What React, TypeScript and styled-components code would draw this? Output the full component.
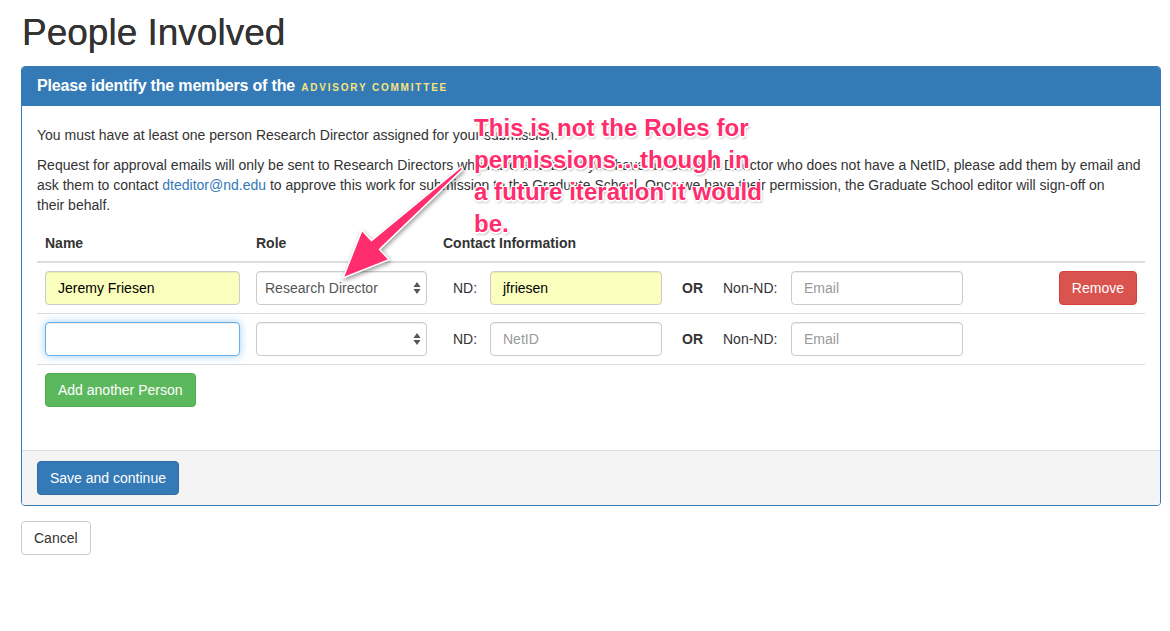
import React from "react";
import styled, { createGlobalStyle } from "styled-components";

const GlobalStyle = createGlobalStyle`
  html, body { margin: 0; padding: 0; background: #fff; }
  body {
    font-family: "Liberation Sans", Helvetica, Arial, sans-serif;
    font-size: 14px;
    line-height: 20px;
    color: #333;
  }
  * { box-sizing: border-box; }
`;

const Page = styled.div`
  position: relative;
  width: 1170px;
  height: 631px;
  padding: 0 9px 0 21px;
  overflow: hidden;
`;

const Title = styled.h1`
  margin: 13px 0 13px 1px;
  font-size: 37px;
  line-height: 40px;
  font-weight: 500;
  color: #333;
  text-shadow: 0 0 0.4px #333;
`;

const Panel = styled.section`
  border: 1px solid #337ab7;
  border-radius: 4px;
  margin-bottom: 15px;
  overflow: hidden;
`;

const PanelHeading = styled.div`
  background: #337ab7;
  color: #fff;
  padding: 10px 15px;
`;

const PanelTitle = styled.h3`
  margin: 0;
  font-size: 16px;
  line-height: 17px;
  font-weight: 700;
  letter-spacing: -0.18px;
`;

const Term = styled.span`
  color: #f7e47a;
  font-size: 10px;
  letter-spacing: 1.8px;
  text-transform: uppercase;
  margin-left: 2px;
`;

const PanelBody = styled.div`
  padding: 19px 15px 15px;
`;

const Para = styled.p`
  margin: 0 0 10px;
`;

const Line = styled.span`
  white-space: nowrap;
`;

const Link = styled.a`
  color: #337ab7;
  text-decoration: none;
`;

const Table = styled.div`
  margin-bottom: 20px;
`;

const Row = styled.div<{ $head?: boolean }>`
  display: grid;
  grid-template-columns: 211px 187px 1fr 94px;
  align-items: center;
  border-bottom: ${(p) => (p.$head ? "2px" : "1px")} solid #ddd;
  font-weight: ${(p) => (p.$head ? 700 : 400)};
`;

const Cell = styled.div<{ $right?: boolean }>`
  padding: 8px;
  display: flex;
  justify-content: ${(p) => (p.$right ? "flex-end" : "flex-start")};
`;

const Contact = styled.div`
  padding: 8px;
  display: grid;
  grid-template-columns: 47px 172px 61px 68px 172px;
  align-items: center;
`;

const Label = styled.span<{ $pad?: number; $bold?: boolean }>`
  padding-left: ${(p) => p.$pad ?? 0}px;
  font-weight: ${(p) => (p.$bold ? 700 : 400)};
  white-space: nowrap;
`;

const Input = styled.div<{ $filled?: boolean; $focus?: boolean }>`
  width: 100%;
  height: 34px;
  padding: 6px 12px;
  border: 1px solid ${(p) => (p.$focus ? "#66afe9" : "#ccc")};
  border-radius: 4px;
  background: ${(p) => (p.$filled ? "#faffbd" : "#fff")};
  color: ${(p) => (p.$filled ? "#000" : "#999")};
  box-shadow: inset 0 1px 1px rgba(0, 0, 0, 0.075)
    ${(p) => (p.$focus ? ", 0 0 8px rgba(102, 175, 233, 0.6)" : "")};
  font-size: 14px;
  line-height: 20px;
  white-space: nowrap;
  overflow: hidden;
`;

const Select = styled.div`
  width: 100%;
  height: 34px;
  padding: 6px 5px 6px 8px;
  border: 1px solid #ccc;
  border-radius: 4px;
  background: #fff;
  color: #555;
  display: flex;
  align-items: center;
  justify-content: space-between;
  box-shadow: inset 0 1px 1px rgba(0, 0, 0, 0.075);
`;

const Arrows = () => (
  <svg width="8" height="14" viewBox="0 0 8 14">
    <path d="M4 1 L7.5 6 L0.5 6 Z" fill="#555" />
    <path d="M4 13 L7.5 8 L0.5 8 Z" fill="#555" />
  </svg>
);

const Button = styled.button<{ $kind: "danger" | "success" | "primary" | "default" }>`
  height: 34px;
  padding: 6px 12px;
  font-family: inherit;
  font-size: 14px;
  line-height: 20px;
  border-radius: 4px;
  border: 1px solid;
  cursor: pointer;
  white-space: nowrap;
  ${(p) =>
    p.$kind === "danger"
      ? "background:#d9534f;border-color:#d43f3a;color:#fff;"
      : p.$kind === "success"
      ? "background:#5cb85c;border-color:#4cae4c;color:#fff;"
      : p.$kind === "primary"
      ? "background:#337ab7;border-color:#2e6da4;color:#fff;"
      : "background:#fff;border-color:#ccc;color:#333;"}
`;

const PanelFooter = styled.div`
  background: #f4f4f4;
  border-top: 1px solid #ddd;
  padding: 10px 15px;
`;

const Note = styled.div`
  position: absolute;
  left: 474px;
  top: 112px;
  font-size: 24px;
  line-height: 32px;
  font-weight: 700;
  color: #ff2d6e;
  letter-spacing: 0.05px;
  text-shadow: -1px -1px 0 #fff, 1px -1px 0 #fff, -1px 1px 0 #fff, 1px 1px 0 #fff,
    0 -1.5px 0 #fff, 0 1.5px 0 #fff, -1.5px 0 0 #fff, 1.5px 0 0 #fff,
    1px 2px 3px rgba(0, 0, 0, 0.45);
  pointer-events: none;
`;

const ArrowLayer = styled.svg`
  position: absolute;
  left: 0;
  top: 0;
  pointer-events: none;
  filter: drop-shadow(1px 2px 2px rgba(0, 0, 0, 0.4));
`;

export default function App() {
  return (
    <>
      <GlobalStyle />
      <Page>
        <Title>People Involved</Title>
        <Panel>
          <PanelHeading>
            <PanelTitle>
              Please identify the members of the <Term>Advisory Committee</Term>
            </PanelTitle>
          </PanelHeading>
          <PanelBody>
            <Para>You must have at least one person Research Director assigned for your submission.</Para>
            <Para>
              <Line>
                Request for approval emails will only be sent to Research Directors who have a NetID. If you have a
                Research Director who does not have a NetID, please add them by email and
              </Line>
              <br />
              <Line>
                ask them to contact <Link href="#">dteditor@nd.edu</Link> to approve this work for submission to the
                Graduate School. Once we have their permission, the Graduate School editor will sign-off on
              </Line>
              <br />
              <Line>their behalf.</Line>
            </Para>
            <Table>
              <Row $head>
                <Cell>Name</Cell>
                <Cell>Role</Cell>
                <Cell>Contact Information</Cell>
                <Cell />
              </Row>
              <Row>
                <Cell>
                  <Input $filled>Jeremy Friesen</Input>
                </Cell>
                <Cell>
                  <Select>
                    <span>Research Director</span>
                    <Arrows />
                  </Select>
                </Cell>
                <Contact>
                  <Label $pad={10}>ND:</Label>
                  <Input $filled>jfriesen</Input>
                  <Label $pad={20} $bold>OR</Label>
                  <Label>Non-ND:</Label>
                  <Input>Email</Input>
                </Contact>
                <Cell $right>
                  <Button $kind="danger">Remove</Button>
                </Cell>
              </Row>
              <Row>
                <Cell>
                  <Input $focus />
                </Cell>
                <Cell>
                  <Select>
                    <span />
                    <Arrows />
                  </Select>
                </Cell>
                <Contact>
                  <Label $pad={10}>ND:</Label>
                  <Input>NetID</Input>
                  <Label $pad={20} $bold>OR</Label>
                  <Label>Non-ND:</Label>
                  <Input>Email</Input>
                </Contact>
                <Cell />
              </Row>
              <Cell>
                <Button $kind="success">Add another Person</Button>
              </Cell>
            </Table>
          </PanelBody>
          <PanelFooter>
            <Button $kind="primary">Save and continue</Button>
          </PanelFooter>
        </Panel>
        <Button $kind="default">Cancel</Button>

        <ArrowLayer width="1170" height="631" viewBox="0 0 1170 631">
          <polygon
            points="461,166.9 371.4,240.6 361.9,230.3 343,278 389.1,259.7 379.6,249.4 463,169.1"
            fill="#ff2d6e"
            stroke="#fff"
            strokeWidth="1.5"
            strokeLinejoin="round"
          />
        </ArrowLayer>
        <Note>
          This is not the Roles for
          <br />
          permissions…though in
          <br />
          a future iteration it would
          <br />
          be.
        </Note>
      </Page>
    </>
  );
}
